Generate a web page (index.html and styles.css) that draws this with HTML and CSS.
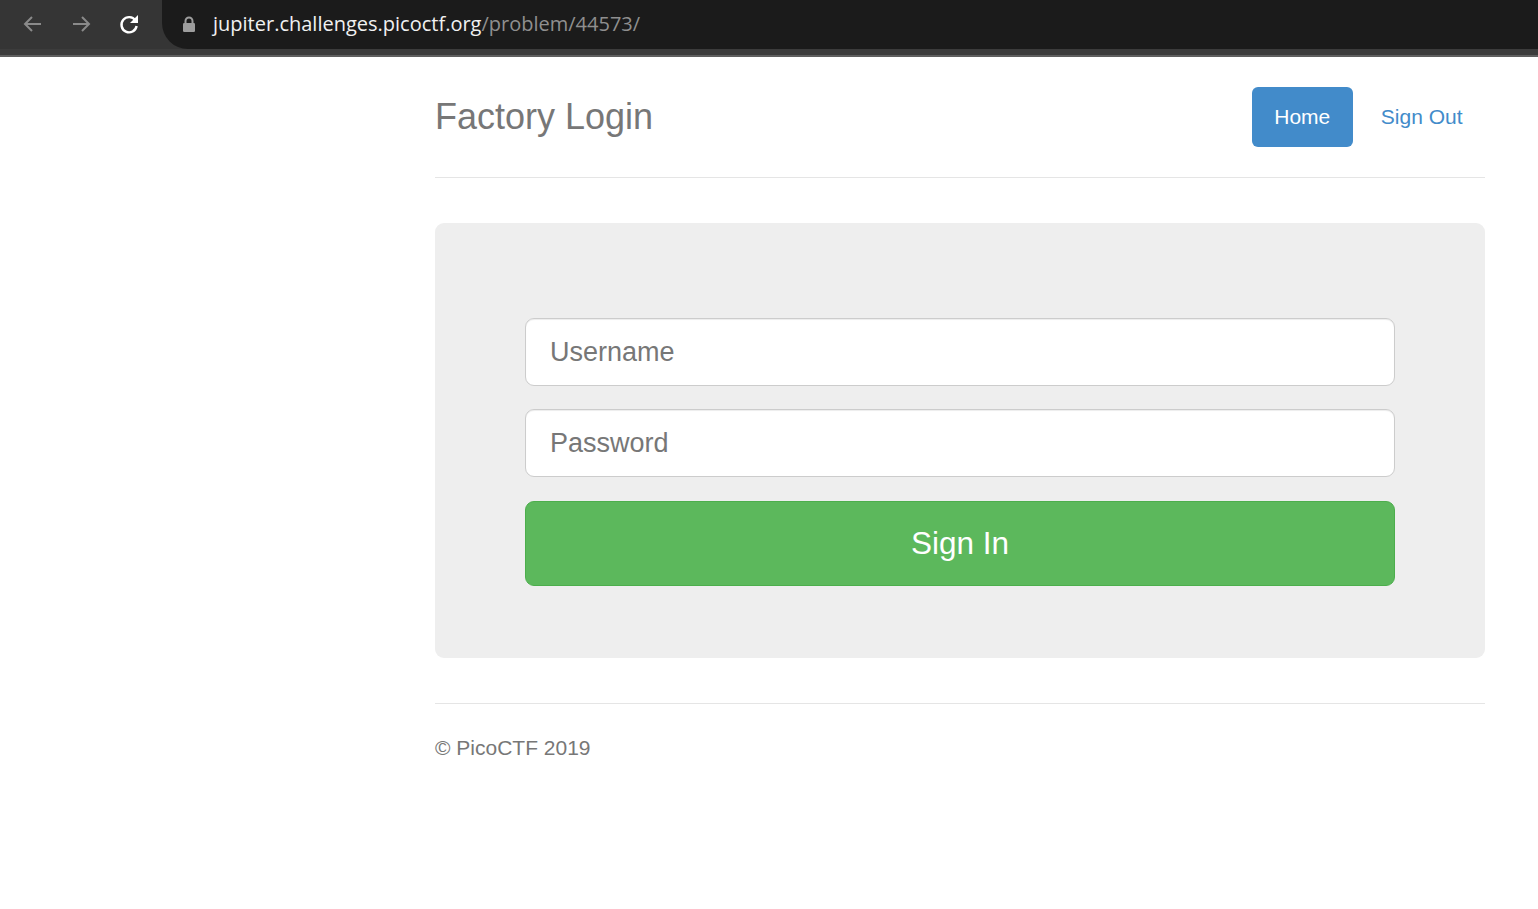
FILE: index.html
```html
<!DOCTYPE html>
<html lang="en">
<head>
<meta charset="utf-8">
<title>Factory Login</title>
<link rel="stylesheet" href="styles.css">
</head>
<body>
<div class="browser">
  <div class="toolbar">
    <div class="navbtns">
      <svg class="ico dim" width="24" height="24" viewBox="0 0 24 24"><path d="M20 12H5M11 5l-7 7 7 7" fill="none" stroke="currentColor" stroke-width="2"/></svg>
      <svg class="ico dim" width="24" height="24" viewBox="0 0 24 24"><path d="M4 12h15M13 5l7 7-7 7" fill="none" stroke="currentColor" stroke-width="2"/></svg>
      <svg class="ico" width="24" height="24" viewBox="0 0 24 24"><path d="M18.4 8.5A7.6 7.6 0 1 0 19.6 14" fill="none" stroke="currentColor" stroke-width="2.4"/><path d="M21 3v8h-8z" fill="currentColor"/></svg>
    </div>
    <div class="omnibox">
      <svg class="lock" width="14" height="16" viewBox="0 0 14 16"><path d="M3.5 7V5a3.5 3.5 0 0 1 7 0v2" fill="none" stroke="currentColor" stroke-width="2"/><rect x="1" y="7" width="12" height="9" rx="1.2" fill="currentColor"/></svg>
      <span class="url"><span class="host">jupiter.challenges.picoctf.org</span><span class="path">/problem/44573/</span></span>
    </div>
  </div>
  <div class="strip"></div>
</div>

<div class="page">
  <div class="container">
    <div class="header">
      <h3 class="brand">Factory Login</h3>
      <nav class="nav">
        <a class="pill active" href="#">Home</a>
        <a class="pill" href="#">Sign Out</a>
      </nav>
    </div>

    <div class="jumbotron">
      <form class="signin">
        <input class="field" type="text" placeholder="Username">
        <input class="field" type="password" placeholder="Password">
        <button class="btn-success" type="button">Sign In</button>
      </form>
    </div>

    <footer class="footer">
      <p>© PicoCTF 2019</p>
    </footer>
  </div>
</div>
</body>
</html>
```

FILE: styles.css
```css
* { box-sizing: border-box; }
html, body { margin: 0; padding: 0; background: #fff; }
body { font-family: "Liberation Sans", Arial, sans-serif; color: #333; }

.browser { height: 57px; display: flex; flex-direction: column; }
.toolbar { height: 49px; background: #353535; display: flex; align-items: center; }
.navbtns { display: flex; align-items: center; gap: 24px; padding-left: 21px; width: 162px; margin-top: -2px; }
.ico { color: #ffffff; display: block; }
.ico.dim { color: #8a8a8a; }
.omnibox { flex: 1; height: 49px; background: #1b1b1b; border-radius: 0 0 0 26px; display: flex; align-items: center; padding-left: 20px; padding-bottom: 2px; }
.lock { color: #9d9d9d; margin-right: 17px; margin-top: 1px; }
.url { font-family: "Open Sans", "Noto Sans", sans-serif; font-size: 20px; white-space: nowrap; }
.host { color: #f1f1f1; }
.path { color: #8f8f8f; }
.strip { height: 8px; background: #3c3c3c; border-bottom: 2px solid #5f5f5f; }

.page { padding-top: 30px; }
.container { width: 1050px; margin-left: 435px; }

.header { display: flex; justify-content: space-between; align-items: flex-start; padding-bottom: 30px; border-bottom: 1px solid #e5e5e5; }
.brand { margin: 0; font-size: 36px; font-weight: normal; line-height: 60px; color: #777; }
.nav { display: flex; gap: 5.5px; }
.pill { display: block; height: 60px; line-height: 60px; padding: 0 22.5px; font-size: 21px; color: #428bca; text-decoration: none; border-radius: 6px; }
.pill.active { background: #428bca; color: #fff; }

.jumbotron { margin-top: 45px; background: #eee; border-radius: 9px; padding: 95px 90px 72px; }
.signin { display: flex; flex-direction: column; gap: 23px; }
.field { display: block; width: 100%; height: 68px; padding: 0 24px; font-family: "Liberation Sans", Arial, sans-serif; font-size: 27px; color: #555; background: #fff; border: 1px solid #ccc; border-radius: 9px; box-shadow: inset 0 1px 1px rgba(0,0,0,.075); outline: none; }
.field::placeholder { color: #777; }
.btn-success { display: block; width: 100%; height: 85px; margin: 1px 0 0; font-family: "Liberation Sans", Arial, sans-serif; font-size: 31.5px; color: #fff; background: #5cb85c; border: 1px solid #4cae4c; border-radius: 9px; cursor: pointer; }

.footer { margin-top: 45px; border-top: 1px solid #e5e5e5; padding-top: 28.5px; color: #777; }
.footer p { margin: 0; font-size: 21px; line-height: 30px; }
```
